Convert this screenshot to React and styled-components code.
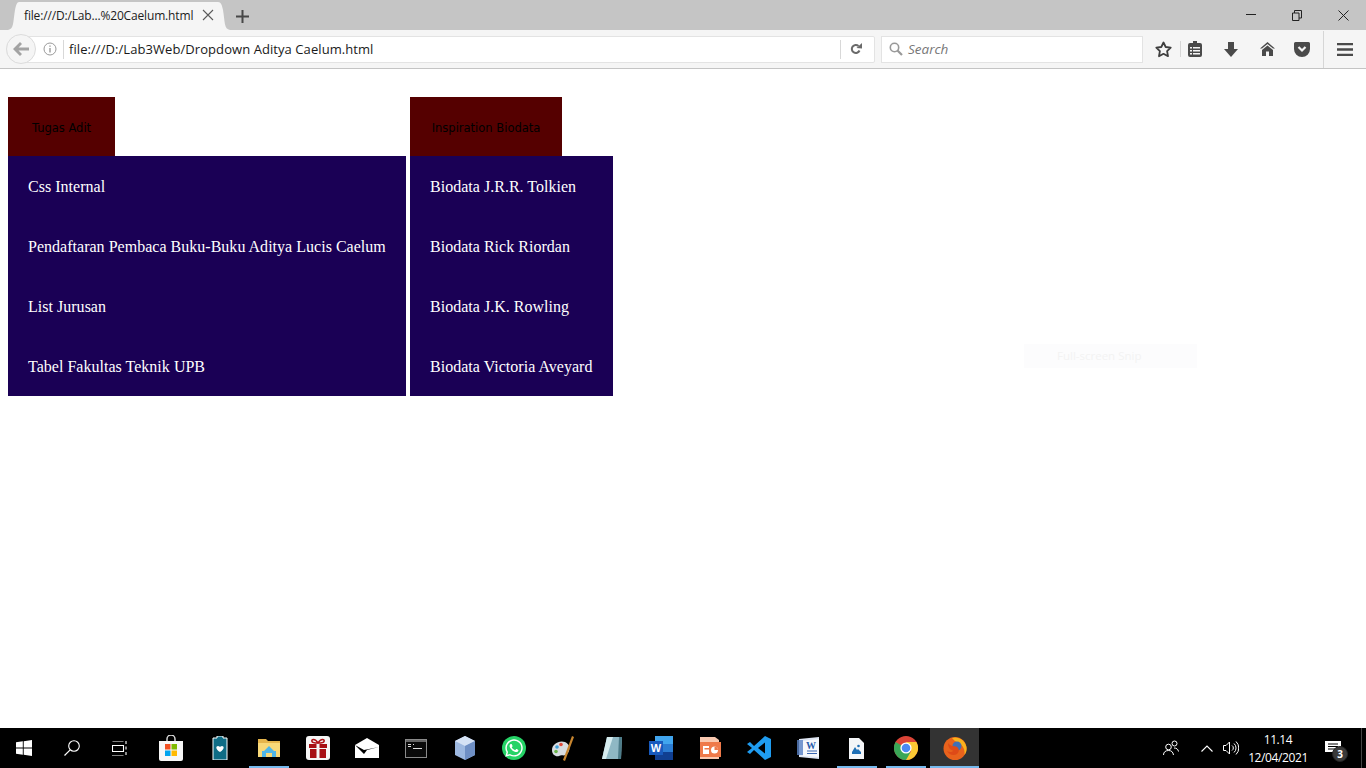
import styled, { createGlobalStyle } from "styled-components";
import { FaWhatsapp } from "react-icons/fa";

const GlobalStyle = createGlobalStyle`
  html, body {
    margin: 0;
    padding: 0;
    background: #fff;
  }
`;

const Screen = styled.div`
  width: 1366px;
  height: 768px;
  display: flex;
  flex-direction: column;
  overflow: hidden;
  position: relative;
  font-family: "Open Sans", "Noto Sans", sans-serif;
`;

/* browser chrome */
const TabBar = styled.div`
  height: 30px;
  flex: none;
  background: #c5c5c5;
  display: flex;
  align-items: flex-end;
  padding-left: 8px;
`;

const Tab = styled.div`
  height: 28px;
  width: 199px;
  flex: none;
  background: #f5f5f5;
  display: flex;
  align-items: center;
  justify-content: space-between;
  padding: 0 4px 2px 5px;
  box-sizing: border-box;
  font-size: 12px;
  letter-spacing: -0.16px;
  color: #1c1c1c;
  white-space: nowrap;
`;

const TabCurve = styled.svg`
  display: block;
  flex: none;
`;

const NewTab = styled.svg`
  margin: 0 0 7px 6px;
  display: block;
  flex: none;
`;

const WindowControls = styled.div`
  margin-left: auto;
  align-self: flex-start;
  display: flex;
  height: 30px;
  align-items: center;
`;

const WindowButton = styled.div`
  width: 46px;
  height: 28px;
  display: flex;
  align-items: center;
  justify-content: center;
`;

const Toolbar = styled.div`
  height: 39px;
  flex: none;
  box-sizing: border-box;
  background: #f5f5f5;
  border-bottom: 1px solid #c4c4c4;
  display: flex;
  align-items: center;
  padding-left: 6px;
`;

const UrlBar = styled.div`
  width: 869px;
  height: 27px;
  flex: none;
  box-sizing: border-box;
  background: #fff;
  border: 1px solid #e3e3e3;
  border-radius: 14px 2px 2px 14px;
  display: flex;
  align-items: center;
  font-size: 13px;
  color: #1a1a1a;
  white-space: nowrap;
`;

const BackCircle = styled.div`
  width: 30px;
  height: 30px;
  margin: -2px 0 -2px -1px;
  flex: none;
  box-sizing: border-box;
  border-radius: 50%;
  background: #f5f5f5;
  border: 1px solid #dcdcdc;
  display: flex;
  align-items: center;
  justify-content: center;
`;

const InfoSlot = styled.div`
  width: 27px;
  flex: none;
  display: flex;
  justify-content: center;
`;

const UrlDivider = styled.div`
  width: 1px;
  height: 19px;
  background: #d8d8d8;
  flex: none;
`;

const UrlText = styled.span`
  flex: 1;
  padding-left: 5px;
  letter-spacing: 0.07px;
`;

const ReloadSlot = styled.div`
  width: 33px;
  height: 100%;
  flex: none;
  box-sizing: border-box;
  padding-right: 4px;
  display: flex;
  align-items: center;
  justify-content: center;
`;

const SearchBar = styled.div`
  width: 262px;
  height: 27px;
  flex: none;
  box-sizing: border-box;
  margin-left: 6px;
  background: #fff;
  border: 1px solid #e3e3e3;
  display: flex;
  align-items: center;
  padding-left: 7px;
  gap: 5px;
  font-size: 13.5px;
  font-style: italic;
  color: #777;
`;

const ToolIcons = styled.div`
  display: flex;
  align-items: center;
  height: 100%;
  margin-left: 4px;
`;

const ToolIcon = styled.div`
  width: ${(p) => p.$w}px;
  flex: none;
  display: flex;
  justify-content: center;
  align-items: center;
`;

const ToolDivider = styled.div`
  width: 1px;
  height: ${(p) => p.$h}px;
  background: #d6d6d6;
  flex: none;
`;

/* page content */
const Page = styled.div`
  flex: 1;
  padding: 28px 0 0 8px;
  display: flex;
  align-items: flex-start;
  gap: 4px;
  background: #fff;
`;

const Dropdown = styled.div`
  width: ${(p) => p.$w}px;
  flex: none;
  display: flex;
  flex-direction: column;
  align-items: flex-start;
`;

const DropButton = styled.div`
  width: ${(p) => p.$w}px;
  height: 59px;
  display: flex;
  align-items: center;
  justify-content: center;
  padding-top: 3px;
  box-sizing: border-box;
  background: #550000;
  color: #000;
  font-family: "DejaVu Sans", sans-serif;
  font-size: 11.5px;
  white-space: nowrap;
`;

const Menu = styled.div`
  width: 100%;
  background: #1a0055;
`;

const MenuItem = styled.div`
  height: 60px;
  box-sizing: border-box;
  padding: 2px 0 0 20px;
  display: flex;
  align-items: center;
  color: #fff;
  font-family: "Liberation Serif", "Times New Roman", serif;
  font-size: 16px;
  letter-spacing: 0.02px;
  white-space: nowrap;
`;

const SnipToast = styled.div`
  position: absolute;
  left: 1024px;
  top: 344px;
  width: 173px;
  height: 24px;
  padding-left: 33px;
  box-sizing: border-box;
  background: #fcfcfd;
  color: #f3f3f3;
  font-size: 11.5px;
  line-height: 24px;
`;

/* taskbar */
const Taskbar = styled.div`
  height: 40px;
  flex: none;
  background: #000;
  display: flex;
  align-items: stretch;
`;

const SysSlot = styled.div`
  width: 48px;
  display: flex;
  align-items: center;
  justify-content: center;
`;

const AppGroup = styled.div`
  display: flex;
  margin-left: 2px;
`;

const AppSlot = styled.div`
  width: 49px;
  position: relative;
  display: flex;
  align-items: center;
  justify-content: center;
  background: ${(p) => (p.$active ? "#333" : "transparent")};
  &::after {
    content: "";
    display: ${(p) => (p.$running || p.$active ? "block" : "none")};
    position: absolute;
    bottom: 0;
    left: ${(p) => (p.$active ? 0 : 5)}px;
    right: ${(p) => (p.$active ? 0 : 4)}px;
    height: 2px;
    background: #76b9ed;
  }
`;

const Tray = styled.div`
  margin-left: auto;
  display: flex;
  align-items: stretch;
  color: #fff;
`;

const TraySlot = styled.div`
  width: ${(p) => p.$w}px;
  display: flex;
  align-items: center;
  justify-content: center;
`;

const Clock = styled.div`
  width: 54px;
  margin-left: 10px;
  padding-top: 1px;
  display: flex;
  flex-direction: column;
  align-items: center;
  justify-content: center;
  font-size: 12px;
  line-height: 18px;
  color: #fff;
  white-space: nowrap;
  letter-spacing: -0.4px;
`;

const NotifyWrap = styled.div`
  width: 56px;
  display: flex;
  align-items: center;
  justify-content: center;
  position: relative;
`;

const Badge = styled.div`
  position: absolute;
  left: 27px;
  top: 18px;
  width: 16px;
  height: 16px;
  border-radius: 50%;
  background: #3a3a3a;
  border: 1px solid #222;
  box-sizing: border-box;
  color: #fff;
  font-size: 10px;
  font-weight: 700;
  line-height: 14px;
  text-align: center;
`;

const ShowDesktop = styled.div`
  width: 5px;
  border-left: 1px solid #444;
  box-sizing: border-box;
`;

const WhatsappBadge = styled.div`
  width: 24px;
  height: 24px;
  border-radius: 50%;
  background: #25d366;
  display: flex;
  align-items: center;
  justify-content: center;
`;

const dark = "#4a4a4a";

const StoreIcon = () => (
  <svg width="24" height="26" viewBox="0 0 24 26">
    <path d="M8 6V4a4 4 0 0 1 8 0v2" fill="none" stroke="#ddd" strokeWidth="1.4" />
    <path d="M0 6h24v18a2 2 0 0 1-2 2H2a2 2 0 0 1-2-2z" fill="#f7f7f7" />
    <rect x="6" y="9" width="5.5" height="5.5" fill="#f25022" />
    <rect x="12.5" y="9" width="5.5" height="5.5" fill="#7fba00" />
    <rect x="6" y="15.5" width="5.5" height="5.5" fill="#00a4ef" />
    <rect x="12.5" y="15.5" width="5.5" height="5.5" fill="#ffb900" />
  </svg>
);

const BatteryApp = () => (
  <svg width="16" height="24" viewBox="0 0 16 24">
    <path d="M5 0h6v2h4v22H1V2h4z" fill="#0f6c85" stroke="#fff" strokeWidth="1" />
    <path d="M8 16c-5-3-4-6-2-6 1 0 2 1 2 1s1-1 2-1c2 0 3 3-2 6z" fill="#fff" />
  </svg>
);

const ExplorerIcon = () => (
  <svg width="22" height="20" viewBox="0 0 22 20">
    <path d="M0 1h8l2 2h12v16H0z" fill="#e6b54c" />
    <path d="M0 5h22v14H0z" fill="#f8d878" />
    <path d="M4 19v-6h2l5-5 5 5h2v6h-4v-4H8v4z" fill="#4fb6e8" />
    <rect x="5" y="13" width="12" height="6" fill="#4fb6e8" />
    <rect x="8" y="15" width="6" height="4" fill="#f8d878" />
  </svg>
);

const GiftIcon = () => (
  <svg width="24" height="24" viewBox="0 0 24 24">
    <rect width="24" height="24" rx="3" fill="#f6f6f6" />
    <path d="M12 7C9 2 5 3 6 5.500 6.500 7 9 7 12 7c3 0 5.500 0 6-1.500C19 3 15 2 12 7z" fill="none" stroke="#b01218" strokeWidth="1.600" />
    <rect x="3" y="8" width="18" height="4" fill="#a70f14" />
    <rect x="4" y="13" width="16" height="9" fill="#a70f14" />
    <rect x="10.500" y="8" width="3" height="14" fill="#f6f6f6" />
  </svg>
);

const MailIcon = () => (
  <svg width="24" height="20" viewBox="0 0 24 20">
    <path d="M12 0l12 7v13H0V7z" fill="#fff" />
    <path d="M0 7l9 5 15-3-12 3-3 4z" fill="#000" />
  </svg>
);

const CmdIcon = () => (
  <svg width="22" height="19" viewBox="0 0 22 19">
    <rect x="0.500" y="0.500" width="21" height="18" fill="#0a0a0a" stroke="#8a8a8a" />
    <rect x="1" y="1" width="20" height="2" fill="#666" />
    <path d="M3 5.500h3M3 7.500h3M8 5.500h1M8 9.500h9" stroke="#ddd" strokeWidth="1" />
  </svg>
);

const BoxIcon = () => (
  <svg width="20" height="24" viewBox="0 0 20 24">
    <path d="M10 0l10 5v14l-10 5-10-5V5z" fill="#9db8e0" />
    <path d="M10 0l10 5-10 5L0 5z" fill="#d5e2f5" />
    <path d="M10 10v14l10-5V5z" fill="#6f8fc4" />
  </svg>
);

const PaletteIcon = () => (
  <svg width="24" height="26" viewBox="0 0 24 26">
    <path d="M1 15C1 9 8 5 14 7c5 2 6 8 2 12-3 3-5 0-8 2-3 1-7-1-7-6z" fill="#d8dde2" />
    <circle cx="6" cy="12" r="1.800" fill="#3f9fd8" />
    <circle cx="10" cy="9.500" r="1.800" fill="#e24b3b" />
    <circle cx="5" cy="16.500" r="1.800" fill="#6bb54a" />
    <path d="M21 1l2 1-9 24-2-1z" fill="#c8862f" />
  </svg>
);

const NotepadIcon = () => (
  <svg width="22" height="24" viewBox="0 0 22 24">
    <path d="M6 1h15l-1 22H1z" fill="#8fb8c4" />
    <path d="M6 1h6L5 23H1z" fill="#d6ecef" />
    <path d="M18 1h3l-1 22h-3z" fill="#4d7c89" />
  </svg>
);

const WordIcon = () => (
  <svg width="24" height="24" viewBox="0 0 24 24">
    <rect x="6" y="0" width="18" height="8" fill="#41a5ee" />
    <rect x="6" y="8" width="18" height="8" fill="#2b7cd3" />
    <rect x="6" y="16" width="18" height="8" fill="#103f91" />
    <rect x="0" y="5" width="14" height="14" fill="#185abd" />
    <text x="7" y="16" fontSize="11" fontWeight="700" fill="#fff" textAnchor="middle" fontFamily="Liberation Sans, sans-serif">W</text>
  </svg>
);

const PptIcon = () => (
  <svg width="22" height="22" viewBox="0 0 22 22">
    <path d="M1 0h15l4 3v19H1z" fill="#f9c9b0" />
    <rect x="1" y="5" width="21" height="15" fill="#ef7a4a" />
    <rect x="4" y="9" width="6" height="8" fill="#fff" />
    <rect x="5.500" y="11" width="4.500" height="1.500" fill="#ef7a4a" />
    <circle cx="15.500" cy="13" r="3.500" fill="#fff" />
    <path d="M15.500 13V9.500a3.500 3.500 0 0 1 3.500 3.500z" fill="#ef7a4a" />
  </svg>
);

const VsCodeIcon = () => (
  <svg width="24" height="24" viewBox="0 0 24 24">
    <path d="M18 0l6 3v18l-6 3L7 14l-4 4-3-2 5-4-5-4 3-2 4 4z" fill="#1f9cf0" />
    <path d="M18 6.500L11 12l7 5.500z" fill="#000" />
  </svg>
);

const Word2Icon = () => (
  <svg width="22" height="22" viewBox="0 0 22 22">
    <path d="M2 2l20-2v22L2 20z" fill="#dfe6f3" />
    <path d="M6 4l16-2v18L6 19z" fill="#f6f8fc" />
    <path d="M10 14h10M10 16.500h10" stroke="#3a66b0" strokeWidth="1" />
    <text x="14" y="11.500" fontSize="10" fontWeight="700" fill="#2a5cab" textAnchor="middle" fontFamily="Liberation Serif, serif">W</text>
    <rect x="0" y="3" width="6" height="15" fill="#5b83c6" opacity="0.8" />
  </svg>
);

const FileIcon = () => (
  <svg width="15" height="21" viewBox="0 0 15 21">
    <path d="M0 0h10l5 5v16H0z" fill="#f4f6f8" />
    <path d="M3 14l3-5 2 3 1-1 3 3v2H3z" fill="#1e6fb5" />
    <circle cx="9.500" cy="8" r="1.300" fill="#1e6fb5" />
  </svg>
);

const ChromeIcon = () => (
  <svg width="24" height="24" viewBox="0 0 24 24">
    <circle cx="12" cy="12" r="12" fill="#db4437" />
    <path d="M12 12L1.600 6A12 12 0 0 0 12 24l5.500-6z" fill="#3aa757" />
    <path d="M12 6h10.400A12 12 0 0 1 12 24l5.200-9z" fill="#fcc934" />
    <circle cx="12" cy="12" r="5.600" fill="#fff" />
    <circle cx="12" cy="12" r="4.300" fill="#4a8af4" />
  </svg>
);

const FirefoxIcon = () => (
  <svg width="24" height="24" viewBox="0 0 24 24">
    <circle cx="12" cy="12.500" r="11.500" fill="#e8621c" />
    <path d="M9 2c6-2 13 2 14.500 9 .5 3-.5 6-2 8 .5-4-.5-8-3.500-10.500C15.500 6.500 12 6 9 2z" fill="#f9b21c" />
    <circle cx="14" cy="10" r="4.500" fill="#3f6fb5" />
    <path d="M5 7c2 3 5 3 8 3.500 3 1 4 5 1 7.500-3 2-8 1-10-3 2 1.500 5 1.500 6.500-.5-2.500 0-5.500-2.500-5.500-7.500z" fill="#de4a17" />
  </svg>
);

export default function App() {
  return (
    <Screen>
      <GlobalStyle />
      <TabBar>
        <TabCurve width="11" height="28" viewBox="0 0 11 28">
          <path d="M0 28C6 27 5 20 7 8 8 3 9 0 11 0v28z" fill="#f5f5f5" />
        </TabCurve>
        <Tab>
          <span>file:///D:/Lab...%20Caelum.html</span>
          <svg width="12" height="12" viewBox="0 0 12 12">
            <path d="M1 1l10 10M11 1L1 11" stroke="#5a5a5a" strokeWidth="1.100" />
          </svg>
        </Tab>
        <TabCurve width="12" height="28" viewBox="0 0 12 28">
          <path d="M0 0c3 0 4 3 5 8 2 12 1 19 7 20H0z" fill="#f5f5f5" />
        </TabCurve>
        <NewTab width="13" height="13" viewBox="0 0 13 13">
          <path d="M6.500 0v13M0 6.500h13" stroke="#484848" strokeWidth="2" />
        </NewTab>
        <WindowControls>
          <WindowButton>
            <svg width="10" height="10" viewBox="0 0 10 10">
              <path d="M0 4.500h10" stroke="#222" strokeWidth="1" />
            </svg>
          </WindowButton>
          <WindowButton>
            <svg width="10" height="11" viewBox="0 0 10 11">
              <path d="M0.500 3h6.500v7.500H0.500zM2.500 3V0.500h7V8H7" fill="none" stroke="#222" strokeWidth="1" />
            </svg>
          </WindowButton>
          <WindowButton>
            <svg width="11" height="11" viewBox="0 0 11 11">
              <path d="M0.500 0.500l10 10M10.500 0.500l-10 10" stroke="#222" strokeWidth="1" />
            </svg>
          </WindowButton>
        </WindowControls>
      </TabBar>

      <Toolbar>
        <UrlBar>
          <BackCircle>
            <svg width="16" height="14" viewBox="0 0 16 14">
              <path d="M7 0L0 7l7 7 2-2-3.500-3.500H16v-3H5.500L9 2z" fill="#a3a3a3" />
            </svg>
          </BackCircle>
          <InfoSlot>
            <svg width="14" height="14" viewBox="0 0 14 14">
              <circle cx="7" cy="7" r="6" fill="none" stroke="#9a9a9a" strokeWidth="1" />
              <path d="M7 6v4.500M7 3.500v1.300" stroke="#9a9a9a" strokeWidth="1.400" />
            </svg>
          </InfoSlot>
          <UrlDivider />
          <UrlText>file:///D:/Lab3Web/Dropdown Aditya Caelum.html</UrlText>
          <UrlDivider />
          <ReloadSlot>
            <svg width="12" height="12" viewBox="0 0 12 12">
              <path d="M9.500 7.500A4 4 0 1 1 8.500 3" fill="none" stroke="#6a6a6a" strokeWidth="2" />
              <path d="M6.500 5L12 5.500V0z" fill="#6a6a6a" />
            </svg>
          </ReloadSlot>
        </UrlBar>
        <SearchBar>
          <svg width="14" height="14" viewBox="0 0 14 14">
            <circle cx="5.500" cy="5.500" r="4.200" fill="none" stroke="#999" strokeWidth="1.600" />
            <path d="M8.500 8.500L13 13" stroke="#999" strokeWidth="2.200" />
          </svg>
          <span>Search</span>
        </SearchBar>
        <ToolIcons>
          <ToolIcon $w={33}>
            <svg width="17" height="17" viewBox="0 0 17 17">
              <path d="M8.500 1.500l2.200 4.500 5 .7-3.600 3.500.9 5-4.500-2.400L4 15.200l.9-5L1.300 6.700l5-.7z" fill="none" stroke="#3e3e3e" strokeWidth="1.800" strokeLinejoin="round" />
            </svg>
          </ToolIcon>
          <ToolDivider $h={16} />
          <ToolIcon $w={28}>
            <svg width="14" height="16" viewBox="0 0 14 16">
              <path d="M5 0h4v2h3a2 2 0 0 1 2 2v10a2 2 0 0 1-2 2H2a2 2 0 0 1-2-2V4a2 2 0 0 1 2-2h3z" fill={dark} />
              <path d="M2 6h2v1.500H2zM5 6h7v1.500H5zM2 9h2v1.500H2zM5 9h7v1.500H5zM2 12h2v1.500H2zM5 12h7v1.500H5z" fill="#f5f5f5" />
            </svg>
          </ToolIcon>
          <ToolIcon $w={44}>
            <svg width="14" height="15" viewBox="0 0 14 15">
              <path d="M4 0h6v7h4l-7 8-7-8h4z" fill={dark} />
            </svg>
          </ToolIcon>
          <ToolIcon $w={28}>
            <svg width="15" height="14" viewBox="0 0 15 14">
              <path d="M7.500 0L15 6.500h-2L7.500 2 2 6.500H0zM7.500 3.500L13 8v6H9V9.500H6V14H2V8z" fill={dark} />
            </svg>
          </ToolIcon>
          <ToolIcon $w={42}>
            <svg width="16" height="15" viewBox="0 0 16 15">
              <path d="M1.500 0h13A1.500 1.500 0 0 1 16 1.500V7A8 8 0 0 1 0 7V1.500A1.500 1.500 0 0 1 1.500 0z" fill={dark} />
              <path d="M4.500 5L8 8.500 11.500 5" fill="none" stroke="#f5f5f5" strokeWidth="2.200" />
            </svg>
          </ToolIcon>
          <ToolDivider $h={37} />
          <ToolIcon $w={42}>
            <svg width="16" height="13" viewBox="0 0 16 13">
              <path d="M0 1h16M0 6.500h16M0 12h16" stroke={dark} strokeWidth="2.400" />
            </svg>
          </ToolIcon>
        </ToolIcons>
      </Toolbar>

      <Page>
        <Dropdown $w={398}>
          <DropButton $w={107}>Tugas Adit</DropButton>
          <Menu>
            <MenuItem>Css Internal</MenuItem>
            <MenuItem>Pendaftaran Pembaca Buku-Buku Aditya Lucis Caelum</MenuItem>
            <MenuItem>List Jurusan</MenuItem>
            <MenuItem>Tabel Fakultas Teknik UPB</MenuItem>
          </Menu>
        </Dropdown>
        <Dropdown $w={203}>
          <DropButton $w={152}>Inspiration Biodata</DropButton>
          <Menu>
            <MenuItem>Biodata J.R.R. Tolkien</MenuItem>
            <MenuItem>Biodata Rick Riordan</MenuItem>
            <MenuItem>Biodata J.K. Rowling</MenuItem>
            <MenuItem>Biodata Victoria Aveyard</MenuItem>
          </Menu>
        </Dropdown>
      </Page>

      <SnipToast>Full-screen Snip</SnipToast>

      <Taskbar>
        <SysSlot>
          <svg width="16" height="16" viewBox="0 0 16 16">
            <path d="M0 2.300l6.800-1v6.200H0zM7.700 1.200L16 0v7.500H7.700zM0 8.500h6.800v6.200l-6.800-1zM7.700 8.500H16V16l-8.300-1.200z" fill="#fff" />
          </svg>
        </SysSlot>
        <SysSlot>
          <svg width="16" height="16" viewBox="0 0 16 16">
            <circle cx="10" cy="6" r="5.300" fill="none" stroke="#fff" strokeWidth="1.100" />
            <path d="M6.200 9.800L0.500 15.500" stroke="#fff" strokeWidth="1.200" />
          </svg>
        </SysSlot>
        <SysSlot>
          <svg width="16" height="15" viewBox="0 0 16 15">
            <path d="M0.500 0h11M0 15h11.500M0.500 4.500h11v6h-11zM14 0v3M14 5.500v3M14 11v3" fill="none" stroke="#fff" strokeWidth="1.100" />
          </svg>
        </SysSlot>
        <AppGroup>
          <AppSlot><StoreIcon /></AppSlot>
          <AppSlot><BatteryApp /></AppSlot>
          <AppSlot $running><ExplorerIcon /></AppSlot>
          <AppSlot><GiftIcon /></AppSlot>
          <AppSlot><MailIcon /></AppSlot>
          <AppSlot><CmdIcon /></AppSlot>
          <AppSlot><BoxIcon /></AppSlot>
          <AppSlot><WhatsappBadge><FaWhatsapp size={20} color="#fff" /></WhatsappBadge></AppSlot>
          <AppSlot><PaletteIcon /></AppSlot>
          <AppSlot><NotepadIcon /></AppSlot>
          <AppSlot><WordIcon /></AppSlot>
          <AppSlot><PptIcon /></AppSlot>
          <AppSlot><VsCodeIcon /></AppSlot>
          <AppSlot><Word2Icon /></AppSlot>
          <AppSlot $running><FileIcon /></AppSlot>
          <AppSlot $running><ChromeIcon /></AppSlot>
          <AppSlot $active><FirefoxIcon /></AppSlot>
        </AppGroup>
        <Tray>
          <TraySlot $w={44}>
            <svg width="16" height="16" viewBox="0 0 16 16">
              <circle cx="5.500" cy="7" r="2.800" fill="none" stroke="#fff" strokeWidth="1" />
              <path d="M0.500 15c0-3 2-4.500 5-4.500s4.500 1.500 5 4.500" fill="none" stroke="#fff" strokeWidth="1" />
              <circle cx="11.500" cy="3.500" r="2.500" fill="none" stroke="#fff" strokeWidth="1" />
              <path d="M11 8c2.500 0 4 1 4.500 3.500" fill="none" stroke="#fff" strokeWidth="1" />
            </svg>
          </TraySlot>
          <TraySlot $w={28}>
            <svg width="12" height="7" viewBox="0 0 12 7">
              <path d="M0.500 6.500L6 1l5.500 5.500" fill="none" stroke="#fff" strokeWidth="1.100" />
            </svg>
          </TraySlot>
          <TraySlot $w={20}>
            <svg width="16" height="14" viewBox="0 0 16 14">
              <path d="M0.500 4.500h2.500L6.500 1v12L3 9.500H0.500z" fill="none" stroke="#fff" strokeWidth="1" />
              <path d="M9 4.500a3 3 0 0 1 0 5M11 2.500a6 6 0 0 1 0 9M13 0.500a9 9 0 0 1 0 13" fill="none" stroke="#fff" strokeWidth="1" />
            </svg>
          </TraySlot>
          <Clock>
            <span>11.14</span>
            <span>12/04/2021</span>
          </Clock>
          <NotifyWrap>
            <svg width="16" height="15" viewBox="0 0 16 15">
              <path d="M0 0h16v11h-5l-3 4v-4H0z" fill="#fff" />
              <path d="M3 3h10M3 5.500h10M3 8h7" stroke="#000" strokeWidth="1" />
            </svg>
            <Badge>3</Badge>
          </NotifyWrap>
          <ShowDesktop />
        </Tray>
      </Taskbar>
    </Screen>
  );
}
